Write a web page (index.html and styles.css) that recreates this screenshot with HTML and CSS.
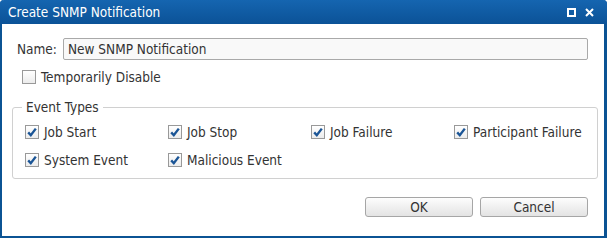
FILE: index.html
```html
<!DOCTYPE html>
<html lang="en">
<head>
    <meta charset="UTF-8">
    <title>Create SNMP Notification</title>
    <link rel="stylesheet" href="styles.css">
</head>
<body>

    <div class="dialog">
        <!-- Title bar -->
        <div class="titlebar">
            <span class="title">Create SNMP Notification</span>
            <span class="tools">
                <span class="tool-max"></span>
                <svg class="tool-close" width="9" height="9" viewBox="0 0 9 9">
                    <path d="M1 1 L8 8 M8 1 L1 8" stroke="#fff" stroke-width="2"/>
                </svg>
            </span>
        </div>

        <div class="content">
            <div class="name-row">
                <label>Name:</label>
                <div class="textbox">New SNMP Notification</div>
            </div>

            <div class="check-row">
                <span class="cb"></span>
                <span>Temporarily Disable</span>
            </div>

            <fieldset class="events">
                <legend>Event Types</legend>
                <div class="event-grid">
                    <div class="check"><span class="cb on"><svg viewBox="0 0 12 12"><path d="M2.2 6.4 L4.8 9.2 L9.8 2.6" fill="none" stroke="#1b5596" stroke-width="2.4"/></svg></span>Job Start</div>
                    <div class="check"><span class="cb on"><svg viewBox="0 0 12 12"><path d="M2.2 6.4 L4.8 9.2 L9.8 2.6" fill="none" stroke="#1b5596" stroke-width="2.4"/></svg></span>Job Stop</div>
                    <div class="check"><span class="cb on"><svg viewBox="0 0 12 12"><path d="M2.2 6.4 L4.8 9.2 L9.8 2.6" fill="none" stroke="#1b5596" stroke-width="2.4"/></svg></span>Job Failure</div>
                    <div class="check"><span class="cb on"><svg viewBox="0 0 12 12"><path d="M2.2 6.4 L4.8 9.2 L9.8 2.6" fill="none" stroke="#1b5596" stroke-width="2.4"/></svg></span>Participant Failure</div>
                    <div class="check"><span class="cb on"><svg viewBox="0 0 12 12"><path d="M2.2 6.4 L4.8 9.2 L9.8 2.6" fill="none" stroke="#1b5596" stroke-width="2.4"/></svg></span>System Event</div>
                    <div class="check"><span class="cb on"><svg viewBox="0 0 12 12"><path d="M2.2 6.4 L4.8 9.2 L9.8 2.6" fill="none" stroke="#1b5596" stroke-width="2.4"/></svg></span>Malicious Event</div>
                </div>
            </fieldset>

            <div class="buttons">
                <button>OK</button>
                <button>Cancel</button>
            </div>
        </div>
    </div>

</body>
</html>
```

FILE: styles.css
```css
/* General */
body, html {
    margin: 0;
    padding: 0;
    background: #fff;
    font-family: "DejaVu Sans Condensed", "DejaVu Sans", sans-serif;
    font-stretch: condensed;
    font-size: 13.5px;
    color: #333;
}

/* Window frame */
.dialog {
    width: 607px;
    height: 238px;
    box-sizing: border-box;
    border: 2px solid #0b5394;
    border-top: none;
    border-right-width: 3px;
    border-radius: 4px 4px 0 0;
    background: #fff;
    display: flex;
    flex-direction: column;
}

.titlebar {
    height: 24px;
    margin: 0 -3px 0 -2px;
    padding: 0 13px 0 8px;
    border-radius: 4px 4px 0 0;
    background: linear-gradient(#1565b0, #0b5297);
    color: #fff;
    display: flex;
    align-items: center;
    justify-content: space-between;
}

.tools {
    display: flex;
    align-items: center;
    gap: 9px;
}

.tool-max {
    width: 5px;
    height: 5px;
    border: 2px solid #fff;
}

.tool-close {
    display: block;
}

/* Content */
.content {
    flex: 1;
    padding: 14px 0 0 0;
}

.name-row {
    display: flex;
    align-items: center;
    padding-left: 15px;
}

.name-row label {
    width: 46px;
}

.textbox {
    width: 525px;
    height: 22px;
    box-sizing: border-box;
    border: 1px solid #a9a9a9;
    border-radius: 2px;
    background: #f9f9f9;
    padding: 0 4px;
    line-height: 20px;
}

.check-row {
    display: flex;
    align-items: center;
    gap: 5px;
    margin: 9px 0 0 20px;
    line-height: 16px;
}

/* Checkbox */
.cb {
    width: 14px;
    height: 14px;
    box-sizing: border-box;
    border: 1px solid #999;
    background: linear-gradient(#fff, #ececec);
    display: inline-block;
    flex: none;
}

.cb svg {
    display: block;
    width: 12px;
    height: 12px;
}

/* Event types group */
.events {
    margin: 14px 10px 0 10px;
    padding: 0 0 4px 9px;
    border: 1px solid #d0d0d0;
    border-radius: 3px;
}

.events legend {
    padding: 0 4px;
    line-height: 16px;
}

.event-grid {
    display: grid;
    grid-template-columns: repeat(4, 143px);
    grid-auto-rows: 28px;
    padding: 3px 0 0 3px;
}

.check {
    display: flex;
    align-items: center;
    gap: 5px;
}

/* Buttons */
.buttons {
    display: flex;
    justify-content: flex-end;
    gap: 7px;
    margin: 18px 16px 0 0;
}

.buttons button {
    width: 108px;
    height: 20px;
    border: 1px solid #a6a6a6;
    border-radius: 3px;
    background: linear-gradient(#fdfdfd, #e3e3e3);
    font-family: inherit;
    font-stretch: condensed;
    font-size: 13.5px;
    color: #333;
    padding: 0;
}
```
